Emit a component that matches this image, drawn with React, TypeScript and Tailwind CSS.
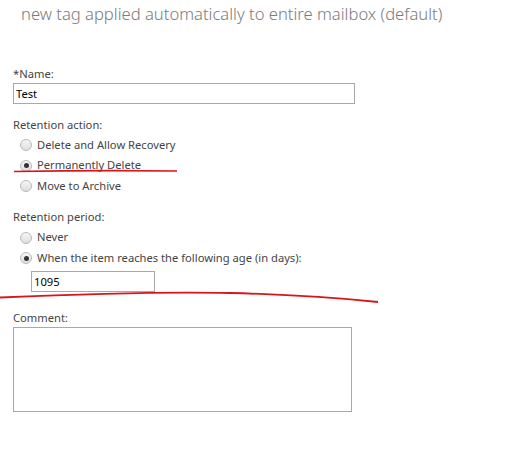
import React from 'react';

const Radio = ({ checked, label }: { checked?: boolean; label: string }) => (
  <div className="flex items-center h-[20.5px]">
    <span className="flex items-center justify-center w-[12px] h-[12px] rounded-full border border-[#b9b9b9] bg-gradient-to-b from-[#f6f6f6] to-[#dedede]">
      {checked && <span className="w-[5px] h-[5px] rounded-full bg-[#333]" />}
    </span>
    <span className="ml-[5px] text-[11.2px] text-[#444]">{label}</span>
  </div>
);

const App = () => {
  return (
    <div
      className="relative w-[518px] h-[457px] bg-white overflow-hidden"
      style={{ fontFamily: '"Noto Sans", "Open Sans", sans-serif' }}
    >
      <h1 className="pl-[21px] pt-[2px] text-[16.6px] leading-[24px] font-light text-[#7b7b7b] whitespace-nowrap">
        new tag applied automatically to entire mailbox (default)
      </h1>

      <div className="pl-[13px] mt-[40px] flex flex-col">
        <label className="text-[11.2px] leading-[16px] text-[#444]">*Name:</label>
        <input
          defaultValue="Test"
          className="mt-[1px] w-[342px] h-[21px] border border-[#a9a9a9] px-[2px] text-[11.2px] text-black outline-none"
        />

        <div className="mt-[13px] text-[11.2px] leading-[16px] text-[#444]">Retention action:</div>
        <div className="mt-[2px] pl-[7px] flex flex-col">
          <Radio label="Delete and Allow Recovery" />
          <Radio label="Permanently Delete" checked />
          <Radio label="Move to Archive" />
        </div>

        <div className="mt-[12px] text-[11.2px] leading-[16px] text-[#444]">Retention period:</div>
        <div className="mt-[3px] pl-[7px] flex flex-col">
          <Radio label="Never" />
          <Radio label="When the item reaches the following age (in days):" checked />
        </div>
        <input
          defaultValue="1095"
          className="mt-[2px] ml-[18px] w-[124px] h-[21px] border border-[#a9a9a9] px-[2px] text-[11.2px] text-black outline-none"
        />

        <div className="mt-[18px] text-[11.2px] leading-[16px] text-[#444]">Comment:</div>
        <textarea className="mt-[1px] w-[339px] h-[85px] border border-[#a9a9a9] resize-none outline-none" />
      </div>

      {/* red annotation strokes */}
      <svg className="absolute inset-0 pointer-events-none" width="518" height="457">
        <path d="M14 171.5 Q95 170 177 171" stroke="#d8141c" strokeWidth="1.6" fill="none" />
        <path d="M0 297.5 Q150 291 230 293 Q310 295 378 302" stroke="#d8141c" strokeWidth="1.8" fill="none" />
      </svg>
    </div>
  );
};

export default App;
